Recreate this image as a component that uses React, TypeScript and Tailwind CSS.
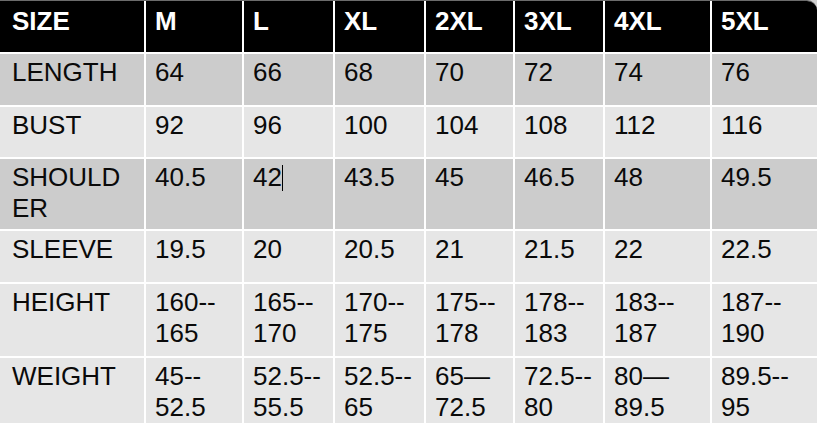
const cols = ['SIZE', 'M', 'L', 'XL', '2XL', '3XL', '4XL', '5XL'];

type Row = { label: string[]; cells: string[][]; dark?: boolean };

const rows: Row[] = [
  { label: ['LENGTH'], cells: [['64'], ['66'], ['68'], ['70'], ['72'], ['74'], ['76']], dark: true },
  { label: ['BUST'], cells: [['92'], ['96'], ['100'], ['104'], ['108'], ['112'], ['116']] },
  { label: ['SHOULD', 'ER'], cells: [['40.5'], ['42'], ['43.5'], ['45'], ['46.5'], ['48'], ['49.5']], dark: true },
  { label: ['SLEEVE'], cells: [['19.5'], ['20'], ['20.5'], ['21'], ['21.5'], ['22'], ['22.5']] },
  {
    label: ['HEIGHT'],
    cells: [
      ['160--', '165'],
      ['165--', '170'],
      ['170--', '175'],
      ['175--', '178'],
      ['178--', '183'],
      ['183--', '187'],
      ['187--', '190'],
    ],
  },
  {
    label: ['WEIGHT'],
    cells: [
      ['45--', '52.5'],
      ['52.5--', '55.5'],
      ['52.5--', '65'],
      ['65\u2014', '72.5'],
      ['72.5--', '80'],
      ['80\u2014', '89.5'],
      ['89.5--', '95'],
    ],
  },
];

function Lines({ lines, cursor }: { lines: string[]; cursor?: boolean }) {
  return (
    <>
      {lines.map((l, i) => (
        <div key={i} className="whitespace-nowrap">
          {l}
          {cursor && i === 0 && <span className="inline-block w-px h-[26px] bg-black align-[-5px]" />}
        </div>
      ))}
    </>
  );
}

export default function App() {
  return (
    <div className="w-[817px] h-[423px] overflow-hidden bg-[#d0d0d0] font-['Liberation_Sans',Arial,sans-serif]">
      <div className="grid grid-cols-[144px_98px_91px_91px_89px_90px_107px_107px] grid-rows-[51px_53px_52px_72px_53px_74px_68px] rounded-tr-[10px] overflow-hidden border-t border-[#6b6b6b] text-[26px] leading-[31px]">
        {cols.map((c, i) => (
          <div
            key={c}
            className={`bg-black text-white font-bold pt-[5px] ${i === 0 ? 'pl-[12px]' : 'border-l-2 border-white pl-[9px]'}`}
          >
            {c}
          </div>
        ))}
        {rows.map((r, ri) => (
          <div key={ri} className="contents">
            <div
              className={`border-t-2 border-white pl-[12px] pt-[3px] text-[#0a0a0a] ${r.dark ? 'bg-[#cccccc]' : 'bg-[#e6e6e6]'}`}
            >
              <Lines lines={r.label} />
            </div>
            {r.cells.map((c, ci) => (
              <div
                key={ci}
                className={`border-t-2 border-l-2 border-white pl-[9px] pt-[3px] text-[#0a0a0a] ${r.dark ? 'bg-[#cccccc]' : 'bg-[#e6e6e6]'}`}
              >
                <Lines lines={c} cursor={ri === 2 && ci === 1} />
              </div>
            ))}
          </div>
        ))}
      </div>
    </div>
  );
}
